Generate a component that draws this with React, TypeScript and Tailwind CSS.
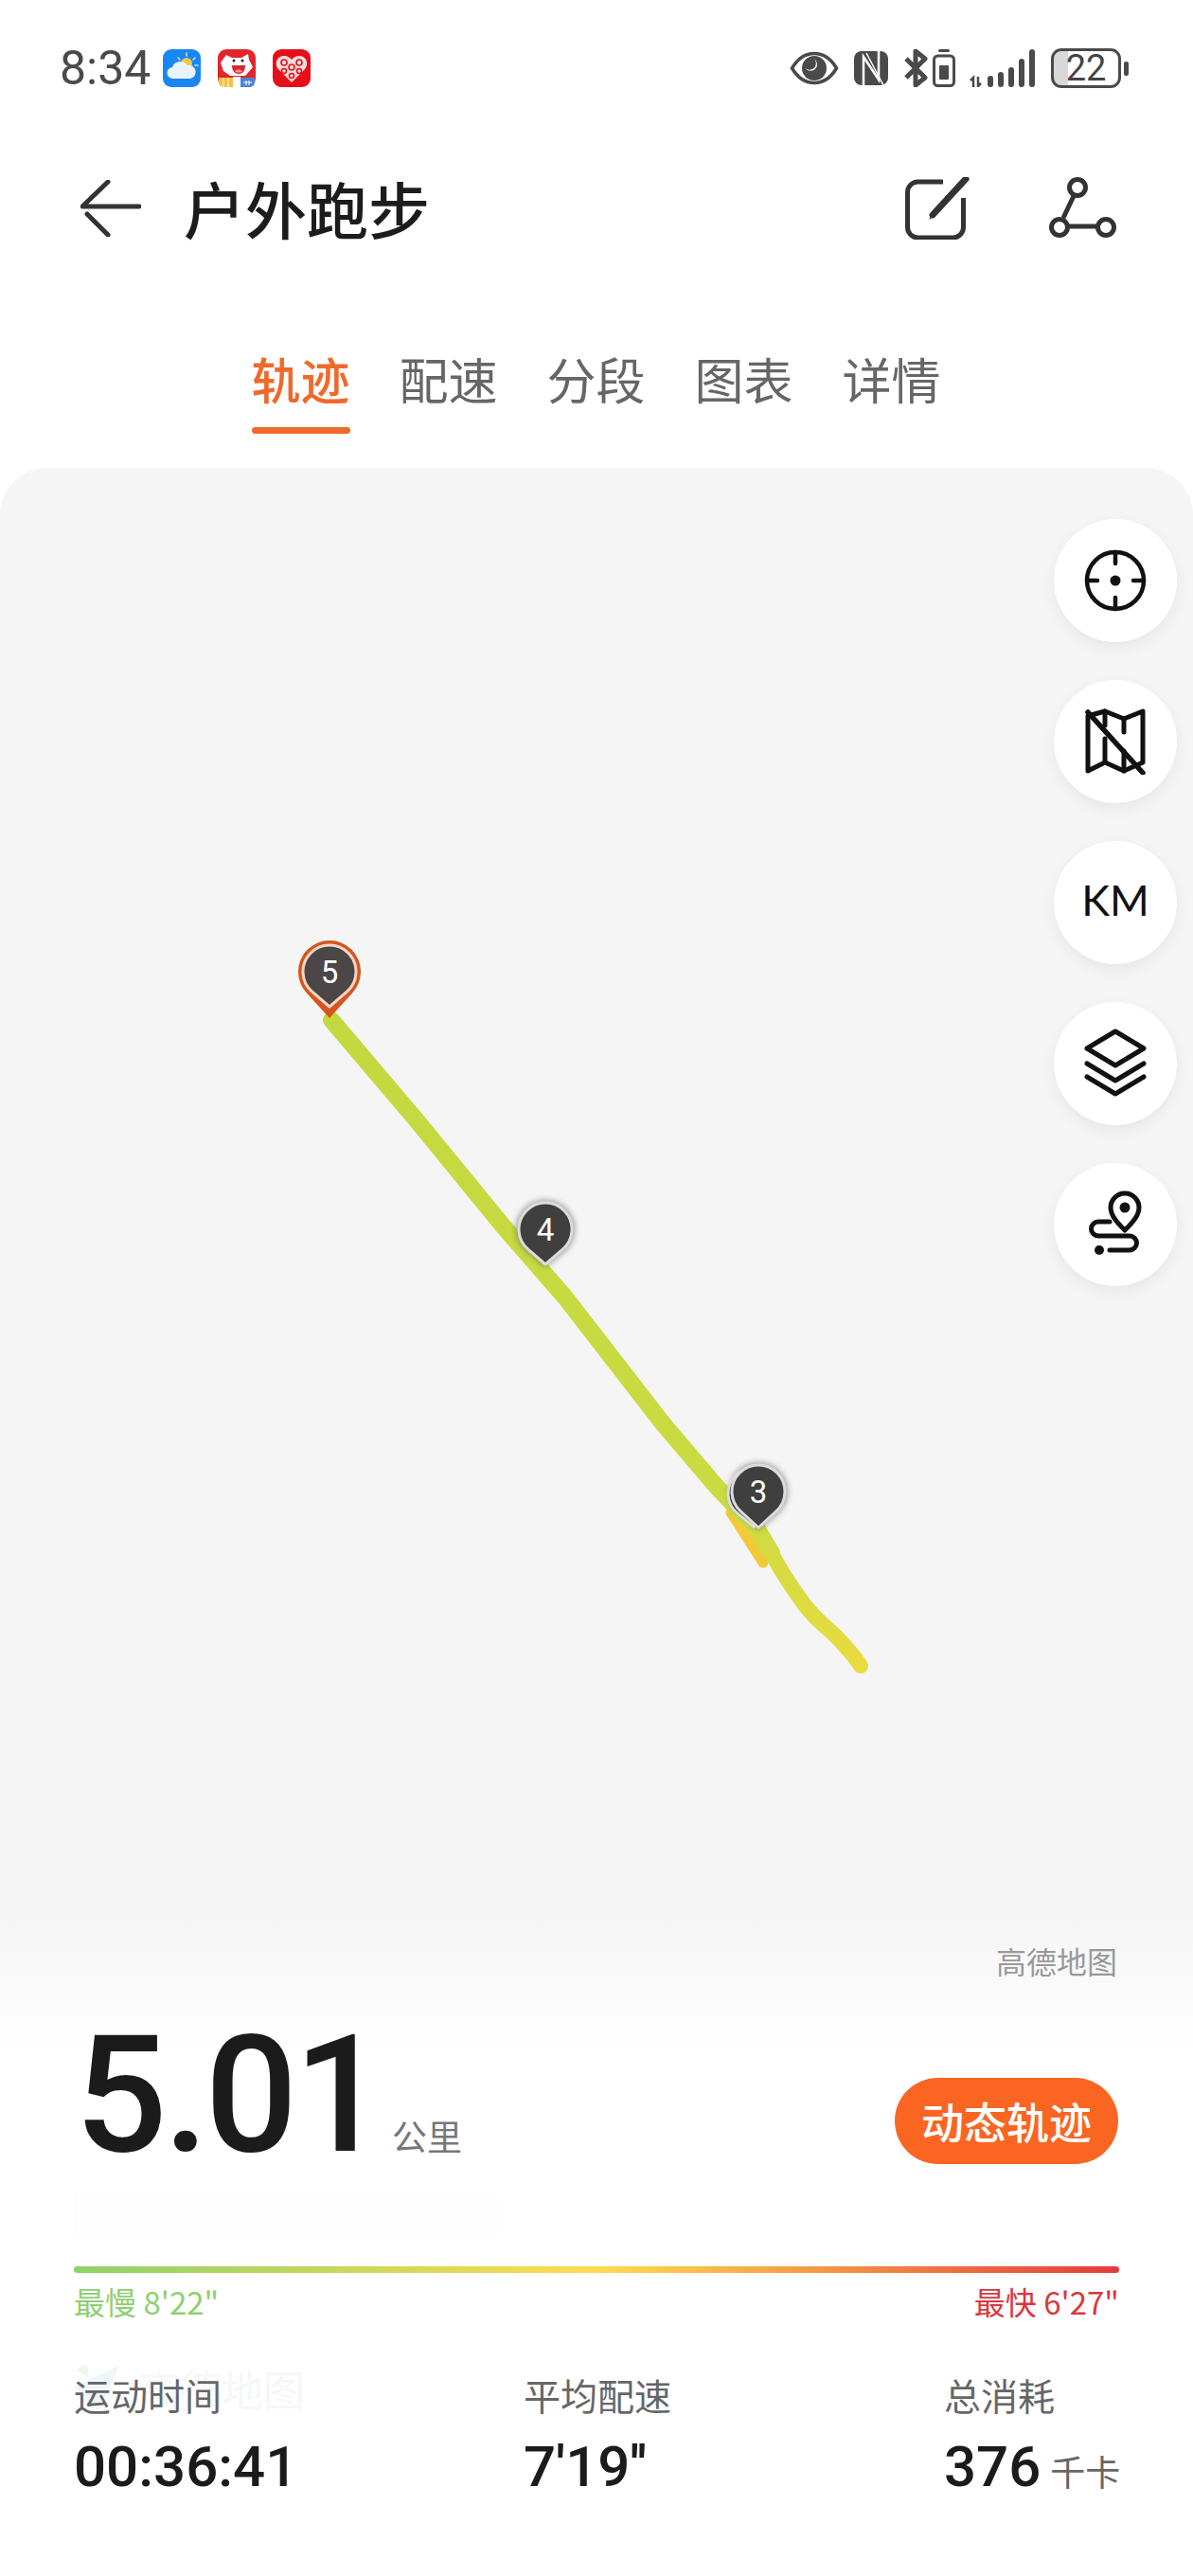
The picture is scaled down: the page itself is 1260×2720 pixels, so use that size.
import React from "react";

const tabs = ["轨迹", "配速", "分段", "图表", "详情"];

const AppIcons = () => (
  <div className="flex gap-[18px] ml-[14px]">
    {/* weather */}
    <svg width="40" height="40" viewBox="0 0 40 40">
      <rect width="40" height="40" rx="9" fill="#1a86f5" />
      <circle cx="25" cy="15" r="6" fill="#f6c544" />
      <path d="M25 4v3M34 9l-2 2M37 17h-3M16 9l2 2" stroke="#cfe6ff" strokeWidth="1.5" strokeLinecap="round" />
      <path d="M11 31a6 6 0 0 1-1-12 9 9 0 0 1 16-2 7 7 0 0 1 3 14z" fill="#e8f3fb" />
    </svg>
    {/* jd dog */}
    <svg width="40" height="40" viewBox="0 0 40 40">
      <rect width="40" height="40" rx="9" fill="#e4252c" />
      <path d="M3 14 9 6 15 9h10l7-4 1 6 4 8-8 9H13L6 23z" fill="#fff" />
      <path d="M15 17h14c0 6-3 9-7 9s-7-3-7-9z" fill="#d9262c" />
      <path d="M18 23c2-2 6-2 8 0-1 2-7 2-8 0z" fill="#f59aa0" />
      <circle cx="17" cy="12" r="1.500" fill="#222" />
      <circle cx="26" cy="12" r="1.500" fill="#222" />
      <path d="M1 30h15v10H6a5 5 0 0 1-5-5z" fill="#f6c244" />
      <path d="M16 29h8v11h-8z" fill="#fff" />
      <path d="M24 30h15v5a5 5 0 0 1-5 5H24z" fill="#4a86d8" />
      <path d="M6 30v10M11 30v10" stroke="#fff" strokeWidth="1" />
      <path d="M27 35h9M30 33v5M33 33v5" stroke="#fff" strokeWidth="1" />
    </svg>
    {/* pinduoduo */}
    <svg width="40" height="40" viewBox="0 0 40 40">
      <rect width="40" height="40" rx="9" fill="#e60f18" />
      <path d="M20 35 6 21c-5-6-1-14 6-14 4 0 6 2 8 4 2-2 4-4 8-4 7 0 11 8 6 14z" fill="#f7dede" />
      <g fill="none" stroke="#e60f18" strokeWidth="1.600">
        <circle cx="12" cy="14" r="3" />
        <circle cx="28" cy="14" r="3" />
        <circle cx="20" cy="19" r="3" />
        <circle cx="12" cy="23" r="2.500" />
        <circle cx="28" cy="23" r="2.500" />
        <circle cx="20" cy="28" r="2.500" />
      </g>
    </svg>
  </div>
);

const StatusRight = () => (
  <div className="flex items-center">
    {/* eye */}
    <svg width="52" height="36" viewBox="0 0 52 36" className="mr-[16px]">
      <path d="M2.500 18C9 7 17 2.500 26 2.500S43 7 49.500 18C43 29 35 33.500 26 33.500S9 29 2.500 18z" fill="none" stroke="#4a4a4a" strokeWidth="3.500" />
      <circle cx="26" cy="18" r="13" fill="#4a4a4a" />
      <path d="M26 8a7.500 7.500 0 0 1 1.500 10.500A7.500 7.500 0 0 1 16 17.500 6 6 0 0 0 26 8z" fill="#fff" />
    </svg>
    {/* nfc */}
    <svg width="36" height="36" viewBox="0 0 36 36" className="mr-[16px]">
      <rect width="36" height="36" rx="8" fill="#4a4a4a" />
      <path d="M10 36V6L26 30V0" fill="none" stroke="#fff" strokeWidth="2.500" />
      <path d="M13 2 31 36" stroke="#fff" strokeWidth="1.500" />
    </svg>
    {/* bluetooth */}
    <svg width="26" height="40" viewBox="0 0 26 40" className="mr-[5px]">
      <path d="M3 10 23 30 13 38V2l10 8L3 30" fill="none" stroke="#4a4a4a" strokeWidth="5" strokeLinejoin="round" />
    </svg>
    {/* earbud battery */}
    <svg width="24" height="40" viewBox="0 0 24 40" className="mr-[15px]">
      <rect x="6" y="0" width="12" height="3" rx="1.500" fill="#4a4a4a" />
      <rect x="1.500" y="7" width="21" height="31.500" rx="4" fill="none" stroke="#4a4a4a" strokeWidth="3" />
      <rect x="7" y="17" width="10" height="15" rx="1" fill="#4a4a4a" />
    </svg>
    {/* signal */}
    <svg width="70" height="40" viewBox="0 0 70 40" className="mr-[16px]">
      <path d="M1 33l3-3v10M9 29v10l3-3" fill="none" stroke="#4a4a4a" strokeWidth="2.500" />
      <path d="M22 31v6M33 27v10M44 22v15M55 13v24M66 3v34" stroke="#4a4a4a" strokeWidth="6" strokeLinecap="round" />
    </svg>
    <div className="flex items-center">
      <div className="w-[74px] h-[42px] border-[3px] border-[#4a4a4a] rounded-[11px] flex items-center justify-center bg-[linear-gradient(90deg,#d8d8d8_22%,transparent_22%)] text-[38px] leading-none text-[#444] font-normal">
        22
      </div>
      <div className="w-[5px] h-[15px] ml-[3px] rounded-[2px] bg-[#4a4a4a]" />
    </div>
  </div>
);

const MapButton = ({ children }: { children: React.ReactNode }) => (
  <div className="w-[130px] h-[130px] rounded-full bg-white shadow-[0_6px_16px_rgba(0,0,0,0.06)] flex items-center justify-center">
    {children}
  </div>
);

// teardrop outline: circle of radius r round (x, cy), point at (x, tip)
const dropPath = (x: number, cy: number, tip: number, r: number) => {
  const sin = r / (tip - cy);
  const cos = Math.sqrt(1 - sin * sin);
  const tx = r * cos;
  const ty = cy + r * sin;
  return `M${x} ${tip} L${x - tx} ${ty} A${r} ${r} 0 1 1 ${x + tx} ${ty} Z`;
};

const Pin = ({ x, cy, tip, r, n, stroke = "#dcdcdc", fill = "#3f3f3f" }: { x: number; cy: number; tip: number; r: number; n?: number; stroke?: string; fill?: string }) => (
  <g>
    <path d={dropPath(x, cy, tip, r)} fill={fill} stroke={stroke} strokeWidth="3" strokeLinejoin="round" />
    {n !== undefined && (
      <text x={x} y={cy + 12} textAnchor="middle" fontSize="33" fill="#fff" fontFamily="Roboto, sans-serif">
        {n}
      </text>
    )}
  </g>
);

const Track = () => (
  <svg className="absolute inset-0" width="1260" height="1640" viewBox="0 494 1260 1640">
    <defs>
      <linearGradient id="trk" gradientUnits="userSpaceOnUse" x1="0" y1="1077" x2="0" y2="1760">
        <stop offset="0" stopColor="#c3d93f" />
        <stop offset="0.75" stopColor="#cbdb42" />
        <stop offset="1" stopColor="#e8dc3f" />
      </linearGradient>
      <filter id="glow" x="-30%" y="-30%" width="160%" height="160%">
        <feGaussianBlur stdDeviation="3" />
      </filter>
    </defs>
    <path d="M772 1597 806 1650" stroke="#f3c93a" strokeWidth="11" fill="none" strokeLinecap="round" />
    <path
      d="M800 1615 815 1640 C826 1662 838 1678 850 1695 C860 1708 870 1716 880 1725 C890 1735 900 1745 909 1759"
      stroke="url(#trk)"
      strokeWidth="16"
      fill="none"
      strokeLinecap="round"
      strokeLinejoin="round"
    />
    <path
      d="M350 1077 440 1183 530 1293 597 1370 700 1503 757 1570 800 1615 815 1640"
      stroke="url(#trk)"
      strokeWidth="18"
      fill="none"
      strokeLinecap="round"
      strokeLinejoin="round"
    />
    {/* pin 5 */}
    <path d={dropPath(348, 1026, 1075, 33)} fill="#d4561f" />
    <Pin x={348} cy={1026} tip={1063} r={28} n={5} stroke="#f5d5c6" fill="#4c4646" />
    {/* pin 4 */}
    <path d={dropPath(576, 1298, 1338, 31)} fill="#666" opacity="0.6" filter="url(#glow)" />
    <Pin x={576} cy={1298} tip={1335} r={28} n={4} />
    {/* pin 3 */}
    <path d={dropPath(801, 1575, 1616, 31)} fill="#666" opacity="0.6" filter="url(#glow)" />
    <Pin x={796} cy={1577} tip={1612} r={27} />
    <Pin x={801} cy={1575} tip={1613} r={28} n={3} />
  </svg>
);

export default function App() {
  return (
    <div className="w-[1260px] h-[2720px] bg-white overflow-hidden font-[Roboto,'Noto_Sans_CJK_SC',sans-serif]">
      {/* status bar */}
      <div className="h-[144px] px-[63px] pr-[68px] flex items-center justify-between">
        <div className="flex items-center">
          <span className="text-[50px] leading-none text-[#4a4a4a] w-[95px]">8:34</span>
          <AppIcons />
        </div>
        <StatusRight />
      </div>

      {/* header */}
      <div className="h-[156px] flex items-center pl-[85px] pr-[80px]">
        <svg width="64" height="60" viewBox="0 0 64 60" className="mr-[45px] -mt-[4px]">
          <path d="M29 2 2 28h60M7 36l22 22" fill="none" stroke="#333" strokeWidth="5" strokeLinecap="round" strokeLinejoin="round" />
        </svg>
        <h1 className="text-[65px] leading-none font-medium text-[#1c1c1c] flex-1 -mt-[6px] font-['Noto_Sans_CJK_SC',sans-serif]">户外跑步</h1>
        <svg width="68" height="66" viewBox="0 0 68 66" className="mr-[84px] -mt-[4px]">
          <path d="M40 5H13A11 11 0 0 0 2.500 16v37a11 11 0 0 0 11 11h37a11 11 0 0 0 11-11V22" fill="none" stroke="#333" strokeWidth="5" />
          <path d="M64 2 29 40" stroke="#333" strokeWidth="7" strokeLinecap="round" />
          <path d="M30 36l-5 9 8-5z" fill="#333" />
        </svg>
        <svg width="72" height="68" viewBox="0 0 72 68" className="-mt-[4px]">
          <path d="M26 21 15 44M21 53h30" stroke="#333" strokeWidth="5" />
          <circle cx="30" cy="12" r="8.500" fill="none" stroke="#333" strokeWidth="5" />
          <circle cx="11" cy="54" r="8.500" fill="none" stroke="#333" strokeWidth="5" />
          <circle cx="60" cy="54" r="8.500" fill="none" stroke="#333" strokeWidth="5" />
        </svg>
      </div>

      {/* tabs */}
      <div className="pt-[70px] flex justify-center gap-[52px] pr-[1px] mb-[36px] font-['Noto_Sans_CJK_SC',sans-serif]">
        {tabs.map((t, i) => (
          <div key={t} className="w-[104px] flex flex-col items-center">
            <span className={`text-[52px] leading-[60px] ${i === 0 ? "text-[#ee6a2b] font-medium" : "text-[#666]"}`}>{t}</span>
            <div className={`w-[104px] h-[7px] mt-[21px] rounded-full ${i === 0 ? "bg-[#ef6a2a]" : "bg-transparent"}`} />
          </div>
        ))}
      </div>

      {/* map */}
      <div className="relative h-[1640px] rounded-t-[50px] bg-[linear-gradient(180deg,#f5f5f5_0,#f5f5f5_1530px,#fdfdfd_1640px)]">
        <Track />
        <div className="absolute right-[17px] top-[54px] flex flex-col gap-[40px]">
          <MapButton>
            <svg width="66" height="66" viewBox="0 0 66 66" fill="none" stroke="#111" strokeWidth="4.500" strokeLinecap="round">
              <circle cx="33" cy="33" r="30" />
              <path d="M33 3v12M33 51v12M3 33h11M52 33h11" />
              <circle cx="33" cy="33" r="5.500" fill="#111" stroke="none" />
            </svg>
          </MapButton>
          <MapButton>
            <svg width="64" height="70" viewBox="0 0 64 70" fill="none" stroke="#111" strokeWidth="5" strokeLinecap="round" strokeLinejoin="round">
              <path d="M3 8v58l18-9 20 9 20-9V3L41 11 21 3 3 8" />
              <path d="M21 3v15M41 11v14M21 32v25M41 45v21" />
              <path d="M3 4l58 64" strokeWidth="5.500" />
            </svg>
          </MapButton>
          <MapButton>
            <span className="text-[45px] leading-none text-[#111] font-['Lato',sans-serif] -mt-[6px]">KM</span>
          </MapButton>
          <MapButton>
            <svg width="68" height="72" viewBox="0 0 68 72" fill="none" stroke="#111" strokeWidth="5" strokeLinecap="round" strokeLinejoin="round" className="-mt-[2px]">
              <path d="M34 3 64 21 34 39 4 21z" />
              <path d="M4 37l30 18 30-18M4 51l30 18 30-18" />
            </svg>
          </MapButton>
          <MapButton>
            <svg width="130" height="130" viewBox="0 0 130 130" fill="none" stroke="#111" strokeWidth="5" strokeLinecap="round">
              <path d="M75 71C66 62 60 55 60 47a15 15 0 0 1 30 0c0 8-6 15-15 24z" strokeLinejoin="round" />
              <circle cx="75" cy="47" r="5.500" fill="#111" stroke="none" />
              <path d="M59 62H47a7.500 7.500 0 0 0 0 15H80a7.500 7.500 0 0 1 0 15H59" />
              <circle cx="48" cy="92" r="5" fill="#111" stroke="none" />
            </svg>
          </MapButton>
        </div>
        <span className="absolute right-[80px] bottom-[48px] text-[32px] leading-none text-[#999] font-['Noto_Sans_CJK_SC',sans-serif]">高德地图</span>
      </div>

      {/* summary */}
      <div className="relative px-[78px] bg-linear-to-b from-[#fdfdfd] to-white to-[40px]">
        <div className="flex items-center justify-between h-[181px] pb-[26px]">
          <div className="flex items-baseline">
            <span className="text-[172px] leading-none font-medium text-[#1b1b1b] tracking-[-4px] ml-[1px]">5.01</span>
            <span className="text-[37px] leading-none text-[#777] ml-[10px] font-['Noto_Sans_CJK_SC',sans-serif]">公里</span>
          </div>
          <div className="w-[236px] h-[91px] mr-[1px] mt-[56px] rounded-full bg-[#fb6522] text-white text-[45px] font-medium flex items-center justify-center font-['Noto_Sans_CJK_SC',sans-serif]">
            动态轨迹
          </div>
        </div>
        <div className="h-[44px] w-[447px] bg-[#fdfdfd]" />
        <div className="h-[7px] mt-[34px] rounded-full bg-[linear-gradient(90deg,#8fd16a,#ffdc4f_50%,#e53b3b)]" />
        <div className="flex justify-between mt-[11px] text-[33px] leading-[38px] font-['Noto_Sans_CJK_SC',sans-serif]">
          <span className="text-[#8fcf72]">最慢 8'22"</span>
          <span className="text-[#d9383e]">最快 6'27"</span>
        </div>
        <div className="relative grid grid-cols-[475px_444px_1fr] mt-[57px]">
          {/* faint amap watermark behind the labels */}
          <div className="absolute left-[-4px] -top-[12px] flex items-center">
            <svg width="70" height="56" viewBox="0 0 70 56">
              <path d="M4 26 52 4 30 52z" fill="#eef5fb" />
              <path d="M6 8l12-6 2 14z" fill="#f0f8e8" />
            </svg>
            <span className="text-[44px] leading-none text-[#f6f7f8] font-['Noto_Sans_CJK_SC',sans-serif] ml-[2px]">高德地图</span>
          </div>
          {[
            { label: "运动时间", value: "00:36:41" },
            { label: "平均配速", value: `7'19''` },
            { label: "总消耗", value: "376", unit: "千卡" },
          ].map((m) => (
            <div key={m.label} className="relative">
              <div className="text-[39px] leading-[44px] text-[#666] font-['Noto_Sans_CJK_SC',sans-serif]">{m.label}</div>
              <div className="mt-[25px] flex items-baseline whitespace-nowrap">
                <span className="text-[60px] leading-[60px] font-medium text-[#1b1b1b]">{m.value}</span>
                {m.unit && <span className="text-[37px] leading-none text-[#666] ml-[10px] font-['Noto_Sans_CJK_SC',sans-serif]">{m.unit}</span>}
              </div>
            </div>
          ))}
        </div>
      </div>
    </div>
  );
}
